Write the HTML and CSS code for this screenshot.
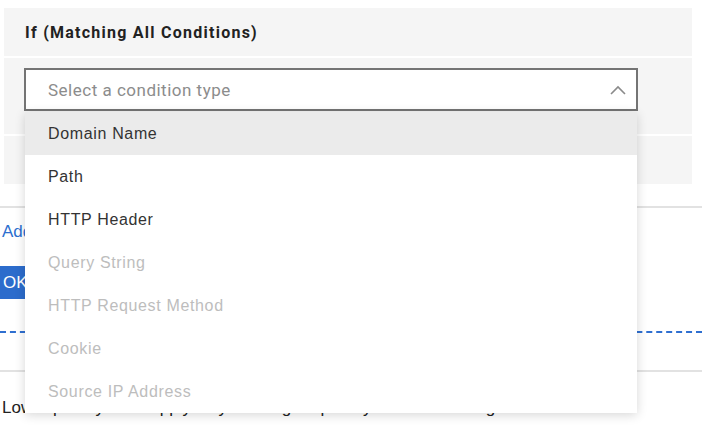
FILE: index.html
```html
<!DOCTYPE html>
<html>
<head>
<meta charset="utf-8">
<link rel="stylesheet" href="styles.css">
</head>
<body>
<div class="page">
  <section class="panel">
    <div class="panel-head">If (Matching All Conditions)</div>
    <div class="panel-row row-select">
      <div class="select-wrap">
        <div class="select">
          <span class="placeholder">Select a condition type</span>
          <svg class="chev" width="18" height="12" viewBox="0 0 18 12"><path d="M2 10 L9 3 L16 10" fill="none" stroke="#8a8a8a" stroke-width="1.6"/></svg>
        </div>
        <ul class="menu">
          <li class="item active">Domain Name</li>
          <li class="item">Path</li>
          <li class="item">HTTP Header</li>
          <li class="item disabled">Query String</li>
          <li class="item disabled">HTTP Request Method</li>
          <li class="item disabled">Cookie</li>
          <li class="item disabled">Source IP Address</li>
        </ul>
      </div>
    </div>
    <div class="panel-row row-empty"></div>
  </section>
  <div class="rule"></div>
  <a class="add-link">Add Condition</a>
  <div class="actions"><button class="ok">OK</button></div>
  <div class="dashed"></div>
  <div class="rule rule2"></div>
  <p class="note">Lower priority rules apply only if no higher priority rule is matching.</p>
</div>
</body>
</html>
```
FILE: styles.css
```css
* { box-sizing: border-box; }
html, body { margin: 0; padding: 0; background: #fff; }
body { width: 702px; height: 428px; overflow: hidden; font-family: "Liberation Sans", Arial, sans-serif; }
.page { padding-top: 8px; }
.panel { margin: 0 10px 0 4px; background: #f5f5f5; }
.panel-head {
  height: 50px; padding: 0 21px; display: flex; align-items: center;
  font-family: Roboto, sans-serif; font-weight: 700; font-size: 16px; letter-spacing: 1.25px; color: #222;
  border-bottom: 2px solid #fff;
}
.panel-row { border-bottom: 2px solid #fff; }
.row-select { height: 78px; padding: 10px 54px 0 20px; }
.row-empty { height: 48px; border-bottom: none; }
.select-wrap { position: relative; }
.select {
  height: 43px; border: 2px solid #747474; background: #fff;
  display: flex; align-items: center; justify-content: space-between;
  padding: 0 9px 0 22px;
}
.placeholder { font-family: Roboto, sans-serif; font-size: 17px; color: #8c8c8c; letter-spacing: 0.5px; }
.chev { display: block; }
.menu {
  position: absolute; left: 1px; right: 1px; top: 44px; margin: 0; padding: 0; list-style: none;
  background: #fff; box-shadow: 0 2px 10px rgba(0,0,0,0.16); z-index: 5;
}
.item { height: 43px; display: flex; align-items: center; padding-left: 23px; font-size: 16px; color: #333; letter-spacing: 0.65px; }
.item.active { background: #ebebeb; }
.item.disabled { color: #bdbdbd; }
.rule { height: 2px; background: #e2e2e2; margin-top: 22px; }
.add-link { display: block; margin: 14px 0 0 2px; color: #2d6fcf; font-size: 17px; line-height: 20px; }
.actions { margin-top: 24px; height: 33px; }
.ok { display: block; height: 33px; width: 60px; border: none; background: #2c6ccc; color: #fff; font-family: "Liberation Sans", Arial, sans-serif; font-size: 17px; text-align: left; padding: 0 0 0 3px; }
.dashed { margin-top: 32px; border-top: 2px dashed #2f6fd0; }
.rule2 { margin-top: 37px; }
.note { margin: 26px 0 0 2px; font-size: 17px; line-height: 20px; color: #222; }
```
